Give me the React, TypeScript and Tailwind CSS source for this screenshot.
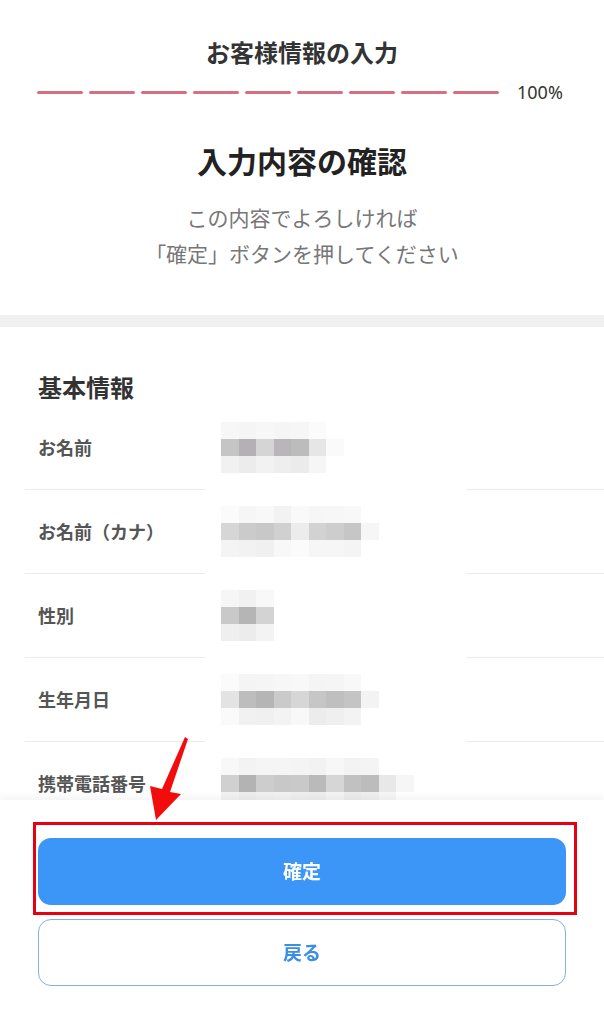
import React from "react";

const font = { fontFamily: '"Noto Sans CJK JP", "Noto Sans", sans-serif' };

type Row = { label: string; top: string[]; mid: string[]; bottom: string[] };

const rows: Row[] = [
  {
    label: "お名前",
    top: ["#f7f7f7", "#f5f5f5", "#f7f7f7", "#f5f5f5", "#f6f6f6", "#fbfbfb"],
    mid: ["#c5c5c5", "#b3b1b3", "#d5d5d5", "#b8b6b8", "#bcbcbc", "#e6e6e6", "#fafafa"],
    bottom: ["#f1f1f1", "#ececec", "#f2f2f2", "#eeeeee", "#ebebeb", "#f6f6f6"],
  },
  {
    label: "お名前（カナ）",
    top: ["#fbfbfb", "#f6f6f6", "#f8f8f8", "#f2f2f2", "#f9f9f9", "#f6f6f6", "#f7f7f7", "#f8f8f8"],
    mid: ["#d6d6d6", "#cbcbcb", "#c8c8c8", "#d0d0d0", "#ececec", "#d2d2d2", "#cdcdcd", "#c6c6c6", "#f6f6f6"],
    bottom: ["#f4f4f4", "#f2f2f2", "#f0f0f0", "#f8f8f8", "#fbfbfb", "#f6f6f6", "#f6f6f6", "#f4f4f4"],
  },
  {
    label: "性別",
    top: ["#f6f6f6", "#f1f1f1", "#f8f8f8"],
    mid: ["#c9c9c9", "#b5b5b5", "#d3d3d3"],
    bottom: ["#efefef", "#ececec", "#f3f3f3"],
  },
  {
    label: "生年月日",
    top: ["#fbfbfb", "#f4f4f4", "#f5f5f5", "#f7f7f7", "#f8f8f8", "#f4f4f4", "#f5f5f5", "#f8f8f8"],
    mid: ["#e3e3e3", "#bdbdbd", "#b5b5b5", "#cacaca", "#d6d6d6", "#c6c6c6", "#bfbfbf", "#c4c4c4", "#f3f3f3"],
    bottom: ["#fafafa", "#f1f1f1", "#f0f0f0", "#f3f3f3", "#f8f8f8", "#ececec", "#efefef", "#f3f3f3"],
  },
  {
    label: "携帯電話番号",
    top: ["#f8f8f8", "#f3f3f3", "#f5f5f5", "#f5f5f5", "#f4f4f4", "#f2f2f2", "#f7f7f7", "#f3f3f3", "#f4f4f4"],
    mid: ["#d0d0d0", "#b3b3b3", "#cdcdcd", "#c8c8c8", "#c9c9c9", "#bababa", "#d6d6d6", "#c1c1c1", "#bcbcbc", "#e8e8e8", "#f6f6f6"],
    bottom: ["#f2f2f2", "#eeeeee", "#f1f1f1", "#f2f2f2", "#efefef", "#eeeeee", "#f4f4f4", "#ececec", "#efefef", "#f6f6f6"],
  },
];

const Cells = ({ colors }: { colors: string[] }) => (
  <div className="flex">
    {colors.map((c, i) => (
      <div key={i} className="w-[17.5px] h-[17px]" style={{ backgroundColor: c }} />
    ))}
  </div>
);

const Divider = () => (
  <div className="flex h-px">
    <div className="w-[180px] ml-[25px] bg-[#ececec]" />
    <div className="w-[261px]" />
    <div className="flex-1 bg-[#ececec]" />
  </div>
);

export default function App() {
  return (
    <div className="relative min-h-[1024px] bg-white text-[#333]" style={font}>
      {/* header */}
      <div className="pt-[35px] text-center text-[24px] leading-[34px] font-bold text-[#333]">
        お客様情報の入力
      </div>
      <div className="flex items-center mt-[13px] h-[20px] pl-[37px]">
        <div className="flex gap-[6px]">
          {Array.from({ length: 9 }).map((_, i) => (
            <div key={i} className="w-[46px] h-[3px] rounded-full bg-[#d4707f]" />
          ))}
        </div>
        <span className="ml-[18px] text-[18px] text-[#333]" style={{ fontFamily: '"Noto Sans", sans-serif' }}>
          100%
        </span>
      </div>

      <div className="mt-[38px] text-center text-[30px] leading-[40px] font-bold text-[#222]">
        入力内容の確認
      </div>
      <div className="mt-[19px] text-center text-[21px] leading-[36px] text-[#777]">
        <p>この内容でよろしければ</p>
        <p>「確定」ボタンを押してください</p>
      </div>

      <div className="mt-[44px] h-[12px] bg-[#f0f0f0]" />

      {/* basic info */}
      <div className="pt-[44px] pl-[38px] text-[24px] leading-[32px] font-bold text-[#333]">
        基本情報
      </div>
      <div className="mt-[3px]">
        {rows.map((r, i) => (
          <div key={i}>
            <div className="flex items-center h-[83px]">
              <div className="w-[221px] pl-[38px] text-[18px] font-bold text-[#555]">{r.label}</div>
              <div className="flex flex-col">
                <Cells colors={r.top} />
                <Cells colors={r.mid} />
                <Cells colors={r.bottom} />
              </div>
            </div>
            {i < rows.length - 1 && <Divider />}
          </div>
        ))}
      </div>
      <div className="h-[240px]" />

      {/* footer */}
      <div className="fixed bottom-0 left-0 right-0 h-[224px] bg-white shadow-[0_-3px_8px_rgba(0,0,0,0.05)]">
        <div className="flex flex-col gap-[14px] px-[38px] pt-[38px]">
          <button className="h-[67px] rounded-[13px] bg-[#3b96f7] text-white text-[19px] font-bold">
            確定
          </button>
          <button className="h-[67px] rounded-[13px] border-[1.5px] border-[#86b2d9] bg-white text-[#3a8ee6] text-[19px] font-bold">
            戻る
          </button>
        </div>
        {/* annotation box */}
        <div className="absolute left-[33px] top-[22px] w-[544px] h-[93px] border-[3px] border-[#e60012]" />
      </div>

      {/* annotation arrow */}
      <svg className="fixed left-0 top-0 pointer-events-none" width="604" height="1024">
        <polygon
          points="185,737 188,739 170,792 181,794 156,820 150,786 162,789"
          fill="#f20d0d"
        />
      </svg>
    </div>
  );
}
